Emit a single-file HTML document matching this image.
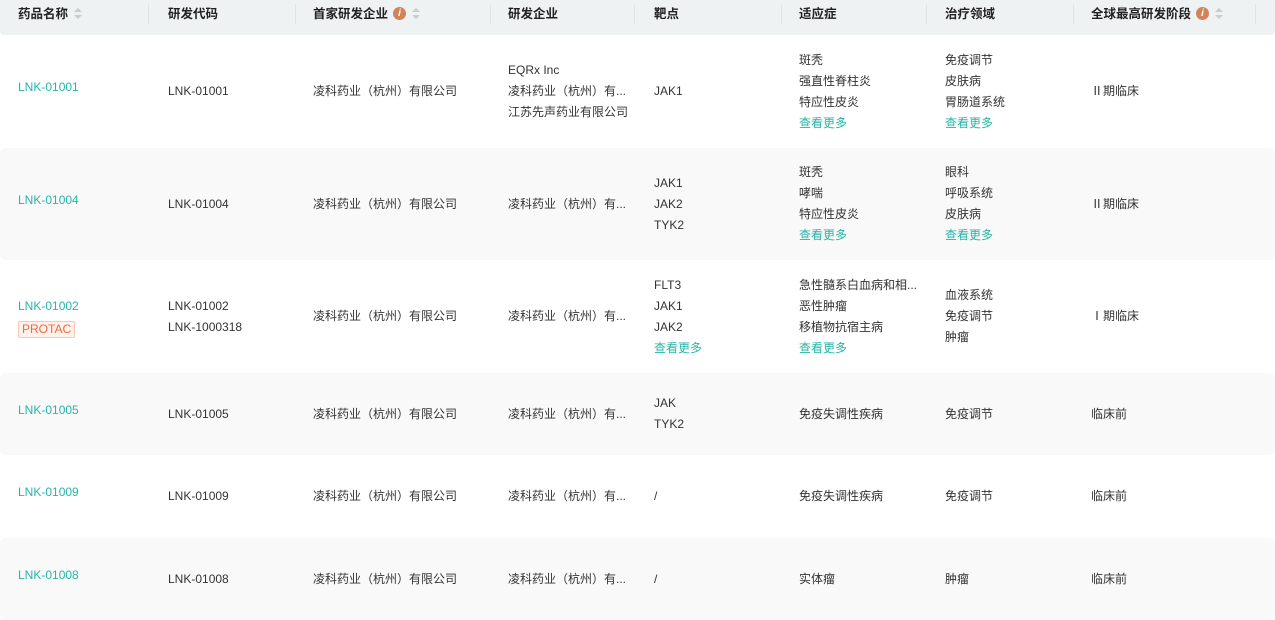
<!DOCTYPE html>
<html><head><meta charset="utf-8"><style>
*{margin:0;padding:0;box-sizing:border-box}
body{width:1275px;height:612px;overflow:hidden;background:#fff;font-family:"Liberation Sans","Noto Sans CJK SC",sans-serif;font-size:12px;color:#333}
.hd{position:absolute;left:0;top:0;width:1275px;height:35px;background:#eef2f3;border-radius:0 0 4px 4px;font-weight:bold;color:#222}
.hd .c{position:absolute;top:0;height:35px;line-height:28px;font-size:12.5px}
.sep{position:absolute;top:4px;width:1px;height:20px;background:#dde5e5}
.sort{display:inline-block;vertical-align:middle;margin-left:6px;width:8px;height:12px;position:relative;top:-1px}
.sort:before{content:"";position:absolute;left:0;top:0;border:4px solid transparent;border-bottom:4px solid #c8ccce;border-top:0}
.sort:after{content:"";position:absolute;left:0;top:7px;border:4px solid transparent;border-top:4px solid #c8ccce;border-bottom:0}
.info{display:inline-block;width:13px;height:13px;border-radius:50%;background:#d0845a;color:#fff;font-size:10px;line-height:13px;text-align:center;font-style:italic;font-weight:bold;vertical-align:middle;margin-left:5px;position:relative;top:-1px}
.row{position:absolute;left:0;width:1275px;border-radius:6px}
.g{background:#f9f9f9}
.cell{position:absolute;top:0;height:100%;display:flex;flex-direction:column;justify-content:center;line-height:21px}
.t{color:#26b5a9}
.tag{display:inline-block;border:1px solid #fbc7b4;background:#fff1ec;color:#f06a3a;font-size:12px;line-height:15px;padding:0 3px;margin-top:4px;border-radius:2px;width:max-content}
</style></head><body>
<div class="hd">
<div class="c" style="left:18px">药品名称<span class="sort"></span></div>
<div class="sep" style="left:148px"></div>
<div class="c" style="left:168px">研发代码</div>
<div class="sep" style="left:295px"></div>
<div class="c" style="left:313px">首家研发企业<span class="info">i</span><span class="sort"></span></div>
<div class="sep" style="left:490px"></div>
<div class="c" style="left:508px">研发企业</div>
<div class="sep" style="left:634px"></div>
<div class="c" style="left:654px">靶点</div>
<div class="sep" style="left:781px"></div>
<div class="c" style="left:799px">适应症</div>
<div class="sep" style="left:926px"></div>
<div class="c" style="left:945px">治疗领域</div>
<div class="sep" style="left:1073px"></div>
<div class="c" style="left:1091px">全球最高研发阶段<span class="info">i</span><span class="sort"></span></div>
<div class="sep" style="left:1255px"></div>
</div>

<div class="row" style="top:35px;height:113px">
<div class="cell t" style="left:18px;padding-bottom:8px">LNK-01001</div>
<div class="cell" style="left:168px">LNK-01001</div>
<div class="cell" style="left:313px">凌科药业（杭州）有限公司</div>
<div class="cell" style="left:508px"><div>EQRx Inc</div><div>凌科药业（杭州）有...</div><div>江苏先声药业有限公司</div></div>
<div class="cell" style="left:654px">JAK1</div>
<div class="cell" style="left:799px"><div>斑秃</div><div>强直性脊柱炎</div><div>特应性皮炎</div><div class="t">查看更多</div></div>
<div class="cell" style="left:945px"><div>免疫调节</div><div>皮肤病</div><div>胃肠道系统</div><div class="t">查看更多</div></div>
<div class="cell" style="left:1091px">Ⅱ期临床</div>
</div>

<div class="row g" style="top:148px;height:112px">
<div class="cell t" style="left:18px;padding-bottom:8px">LNK-01004</div>
<div class="cell" style="left:168px">LNK-01004</div>
<div class="cell" style="left:313px">凌科药业（杭州）有限公司</div>
<div class="cell" style="left:508px">凌科药业（杭州）有...</div>
<div class="cell" style="left:654px"><div>JAK1</div><div>JAK2</div><div>TYK2</div></div>
<div class="cell" style="left:799px"><div>斑秃</div><div>哮喘</div><div>特应性皮炎</div><div class="t">查看更多</div></div>
<div class="cell" style="left:945px"><div>眼科</div><div>呼吸系统</div><div>皮肤病</div><div class="t">查看更多</div></div>
<div class="cell" style="left:1091px">Ⅱ期临床</div>
</div>

<div class="row" style="top:260px;height:113px">
<div class="cell" style="left:18px"><div class="t">LNK-01002</div><div class="tag">PROTAC</div></div>
<div class="cell" style="left:168px"><div>LNK-01002</div><div>LNK-1000318</div></div>
<div class="cell" style="left:313px">凌科药业（杭州）有限公司</div>
<div class="cell" style="left:508px">凌科药业（杭州）有...</div>
<div class="cell" style="left:654px"><div>FLT3</div><div>JAK1</div><div>JAK2</div><div class="t">查看更多</div></div>
<div class="cell" style="left:799px"><div>急性髓系白血病和相...</div><div>恶性肿瘤</div><div>移植物抗宿主病</div><div class="t">查看更多</div></div>
<div class="cell" style="left:945px"><div>血液系统</div><div>免疫调节</div><div>肿瘤</div></div>
<div class="cell" style="left:1091px">Ⅰ期临床</div>
</div>

<div class="row g" style="top:373px;height:82px">
<div class="cell t" style="left:18px;padding-bottom:8px">LNK-01005</div>
<div class="cell" style="left:168px">LNK-01005</div>
<div class="cell" style="left:313px">凌科药业（杭州）有限公司</div>
<div class="cell" style="left:508px">凌科药业（杭州）有...</div>
<div class="cell" style="left:654px"><div>JAK</div><div>TYK2</div></div>
<div class="cell" style="left:799px">免疫失调性疾病</div>
<div class="cell" style="left:945px">免疫调节</div>
<div class="cell" style="left:1091px">临床前</div>
</div>

<div class="row" style="top:455px;height:83px">
<div class="cell t" style="left:18px;padding-bottom:8px">LNK-01009</div>
<div class="cell" style="left:168px">LNK-01009</div>
<div class="cell" style="left:313px">凌科药业（杭州）有限公司</div>
<div class="cell" style="left:508px">凌科药业（杭州）有...</div>
<div class="cell" style="left:654px">/</div>
<div class="cell" style="left:799px">免疫失调性疾病</div>
<div class="cell" style="left:945px">免疫调节</div>
<div class="cell" style="left:1091px">临床前</div>
</div>

<div class="row g" style="top:538px;height:82px">
<div class="cell t" style="left:18px;padding-bottom:8px">LNK-01008</div>
<div class="cell" style="left:168px">LNK-01008</div>
<div class="cell" style="left:313px">凌科药业（杭州）有限公司</div>
<div class="cell" style="left:508px">凌科药业（杭州）有...</div>
<div class="cell" style="left:654px">/</div>
<div class="cell" style="left:799px">实体瘤</div>
<div class="cell" style="left:945px">肿瘤</div>
<div class="cell" style="left:1091px">临床前</div>
</div>
</body></html>
